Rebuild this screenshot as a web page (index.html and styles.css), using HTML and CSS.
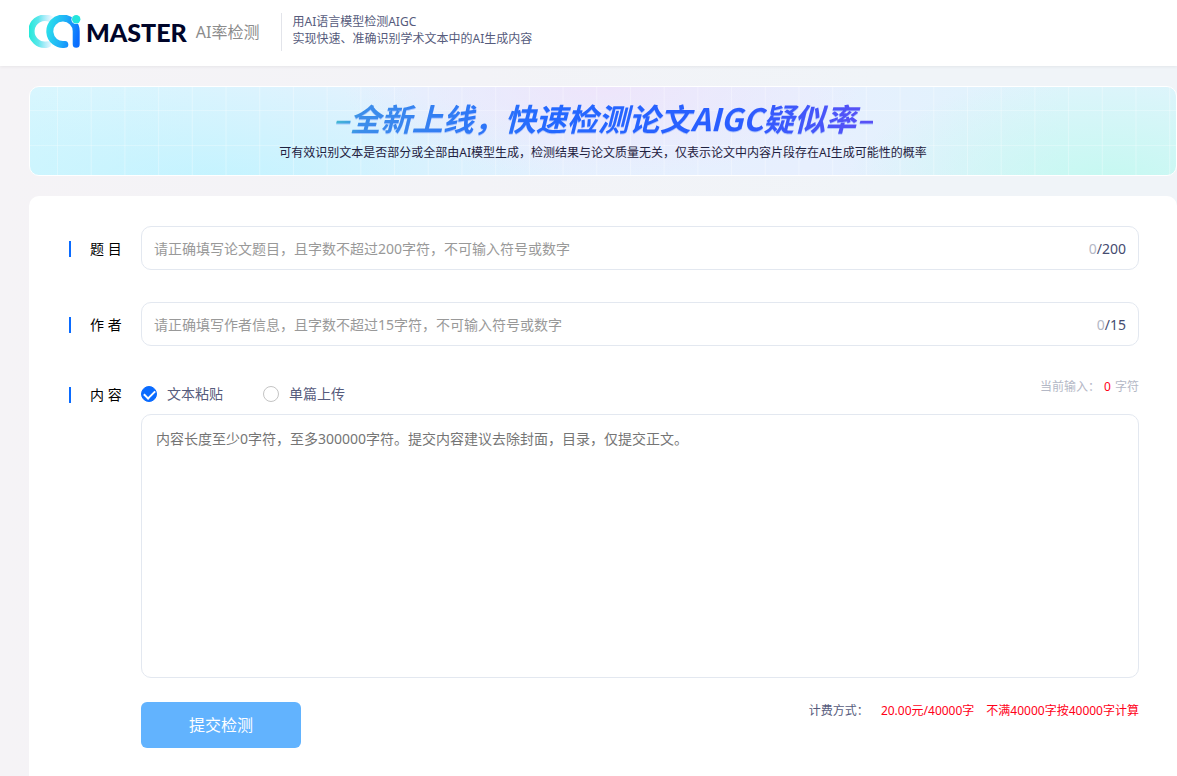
FILE: index.html
```html
<!DOCTYPE html>
<html lang="zh-CN">
<head>
<meta charset="utf-8">
<meta name="viewport" content="width=device-width, initial-scale=1">
<title>AI率检测</title>
<link rel="stylesheet" href="styles.css">
</head>
<body>
<header class="header">
  <a class="brand" href="#">
    <svg class="brand-mark" viewBox="0 0 52 34" aria-hidden="true">
      <defs>
        <linearGradient id="ring-back" gradientUnits="userSpaceOnUse" x1="0" y1="17" x2="24" y2="17">
          <stop offset="0" stop-color="#22ead9"/>
          <stop offset=".4" stop-color="#5fe6ec"/>
          <stop offset="1" stop-color="#9fdcff" stop-opacity=".15"/>
        </linearGradient>
        <linearGradient id="ring-front" gradientUnits="userSpaceOnUse" x1="18" y1="12" x2="50" y2="20">
          <stop offset="0" stop-color="#2be0ea"/>
          <stop offset=".5" stop-color="#1fb0f8"/>
          <stop offset="1" stop-color="#0a6dff"/>
        </linearGradient>
      </defs>
      <path d="M22 4.2A13.5 13.5 0 1 0 19 29.4" fill="none" stroke="url(#ring-back)" stroke-width="6.4" stroke-linecap="round"/>
      <path d="M47.2 29.2V16.8A13.2 13.2 0 1 0 35.8 29.4" fill="none" stroke="url(#ring-front)" stroke-width="7" stroke-linecap="round"/>
      <circle cx="47" cy="4.4" r="4.6" fill="#fff"/>
      <circle cx="47.2" cy="4.2" r="4.2" fill="#24e5dc"/>
    </svg>
    <span class="brand-name">MASTER</span>
    <span class="brand-product">AI率检测</span>
  </a>
  <p class="tagline">用AI语言模型检测AIGC<br>实现快速、准确识别学术文本中的AI生成内容</p>
</header>

<main class="page">
  <section class="banner">
    <h1 class="banner-title">–全新上线，快速检测论文AIGC疑似率–</h1>
    <p class="banner-text">可有效识别文本是否部分或全部由AI模型生成，检测结果与论文质量无关，仅表示论文中内容片段存在AI生成可能性的概率</p>
  </section>

  <form class="card">
    <div class="row">
      <label class="row-label" for="title">题 目</label>
      <div class="field">
        <input class="field-input" id="title" type="text" placeholder="请正确填写论文题目，且字数不超过200字符，不可输入符号或数字">
        <span class="field-count"><span class="count-now">0</span>/200</span>
      </div>
    </div>
    <div class="row">
      <label class="row-label" for="author">作 者</label>
      <div class="field">
        <input class="field-input" id="author" type="text" placeholder="请正确填写作者信息，且字数不超过15字符，不可输入符号或数字">
        <span class="field-count"><span class="count-now">0</span>/15</span>
      </div>
    </div>
    <div class="row">
      <label class="row-label row-label-top" for="content">内 容</label>
      <div class="content">
        <div class="content-head">
          <div class="modes">
            <label class="mode"><input class="mode-radio" type="radio" name="mode" checked>文本粘贴</label>
            <label class="mode"><input class="mode-radio" type="radio" name="mode">单篇上传</label>
          </div>
          <p class="typed">当前输入： <span class="typed-now">0</span> 字符</p>
        </div>
        <textarea class="content-text" id="content" placeholder="内容长度至少0字符，至多300000字符。提交内容建议去除封面，目录，仅提交正文。"></textarea>
        <div class="actions">
          <button class="submit" type="button">提交检测</button>
          <p class="price"><span>计费方式：</span><span class="price-value">20.00元/40000字</span><span class="price-value">不满40000字按40000字计算</span></p>
        </div>
      </div>
    </div>
  </form>
</main>
</body>
</html>
```
FILE: styles.css
```css
* {
  box-sizing: border-box;
}

body {
  margin: 0;
  min-height: 100vh;
  display: flex;
  flex-direction: column;
  background: linear-gradient(90deg, #f5f3f6, #f3f3f7 40%, #f0f4f8 75%);
  color: #000;
  font: 14px/20px "Noto Sans", "Noto Sans CJK SC", sans-serif;
}

p,
h1 {
  margin: 0;
}

input,
textarea,
button {
  font: inherit;
}

.header {
  display: flex;
  align-items: center;
  height: 66px;
  padding: 0 29px 3px;
  background: #fff;
  box-shadow: 0 1px 3px rgba(0, 0, 0, 0.06);
}

.brand {
  display: flex;
  align-items: center;
  color: #000529;
  text-decoration: none;
}

.brand-mark {
  width: 52px;
  height: 34px;
}

.brand-name {
  margin-left: 5px;
  font: 900 25px/32px Lato, sans-serif;
}

.brand-product {
  margin-left: 9px;
  color: #8c8c8c;
  font-size: 16px;
}

.tagline {
  margin-left: 22px;
  padding: 0 0 4px 10px;
  border-left: 1px solid #e2e4ea;
  color: #565b7c;
  font-size: 12px;
  line-height: 17px;
}

.page {
  flex: 1;
  display: flex;
  flex-direction: column;
  gap: 20px;
  padding: 20px 0 0 29px;
}

.banner {
  display: flex;
  flex-direction: column;
  align-items: center;
  height: 90px;
  padding-top: 10px;
  border: 1px solid #fff;
  border-radius: 10px;
  background:
    linear-gradient(90deg, rgba(255, 255, 255, 0.3) 1px, transparent 1px) 27px 0 / calc(100% / 34) 100%,
    linear-gradient(rgba(255, 255, 255, 0.25) 1px, transparent 1px) 0 23px / 100% 35px,
    radial-gradient(ellipse 260px 90px at 50% 0, rgba(240, 226, 250, 0.8), transparent),
    radial-gradient(ellipse 360px 110px at 16% 110%, rgba(184, 243, 255, 0.7), transparent),
    radial-gradient(ellipse 260px 110px at 94% 110%, rgba(190, 250, 238, 0.8), transparent),
    linear-gradient(90deg, #d8f6fe, #e4f1fe 34%, #e7effe 68%, #dff4fc 90%);
}

.banner-title {
  background: linear-gradient(90deg, #45bfd0, #3d8eea 5%, #2468ff 40%, #2a5dff 75%, #5a50f5);
  background-clip: text;
  -webkit-background-clip: text;
  color: transparent;
  filter: drop-shadow(0 1px 0 rgba(70, 120, 255, 0.35));
  font: italic 700 31px/42px "Noto Sans CJK SC", sans-serif;
}

.banner-text {
  color: #1f2140;
  font-size: 12px;
  line-height: 28px;
}

.card {
  flex: 1;
  display: flex;
  flex-direction: column;
  gap: 32px;
  padding: 30px 38px 28px 40px;
  border-radius: 10px 10px 0 0;
  background: #fff;
}

.row {
  display: grid;
  grid-template-columns: 72px 1fr;
  align-items: center;
}

.row-label {
  display: flex;
  align-items: center;
  gap: 19px;
  height: 32px;
  padding-top: 2px;
}

.row-label::before {
  content: "";
  width: 2px;
  height: 16px;
  background: #0a6bff;
}

.row-label-top {
  align-self: start;
}

.field {
  display: flex;
  align-items: center;
  height: 44px;
  padding: 2px 12px 0;
  border: 1px solid #e3e8f0;
  border-radius: 10px;
}

.field-input {
  flex: 1;
  min-width: 0;
  padding: 0;
  border: 0;
  outline: 0;
  background: none;
}

.field-input::placeholder {
  color: #999;
}

.field-count {
  color: #454b70;
}

.count-now {
  color: #b4b8c6;
}

.content-head {
  display: flex;
  justify-content: space-between;
  height: 36px;
}

.modes {
  display: flex;
  gap: 40px;
  height: 32px;
}

.mode {
  display: flex;
  align-items: center;
  gap: 10px;
  color: #565b7c;
}

.mode-radio {
  appearance: none;
  display: flex;
  justify-content: center;
  width: 16px;
  height: 16px;
  margin: 0;
  border: 1px solid #c4c4c4;
  border-radius: 50%;
}

.mode-radio:checked {
  border-color: #0a6bff;
  background: #0a6bff;
}

.mode-radio:checked::after {
  content: "";
  width: 5px;
  height: 9px;
  margin-top: 1px;
  border: solid #fff;
  border-width: 0 2px 2px 0;
  transform: rotate(45deg);
}

.typed {
  color: #b4b8c6;
  font-size: 12px;
  line-height: 18px;
}

.typed-now {
  margin: 0 1px;
  color: #ff0018;
}

.content-text {
  display: block;
  width: 100%;
  height: 264px;
  padding: 14px;
  border: 1px solid #e3e8f0;
  border-radius: 10px;
  outline: 0;
  resize: none;
}

.content-text::placeholder {
  color: #757575;
}

.actions {
  display: flex;
  justify-content: space-between;
  align-items: flex-start;
  margin-top: 24px;
}

.submit {
  width: 160px;
  height: 46px;
  border: 0;
  border-radius: 6px;
  background: #62b3fe;
  color: #fff;
  font-size: 16px;
}

.price {
  display: flex;
  gap: 12px;
  color: #565b7c;
  font-size: 12px;
  line-height: 18px;
}

.price-value {
  color: #ff0018;
}
```
